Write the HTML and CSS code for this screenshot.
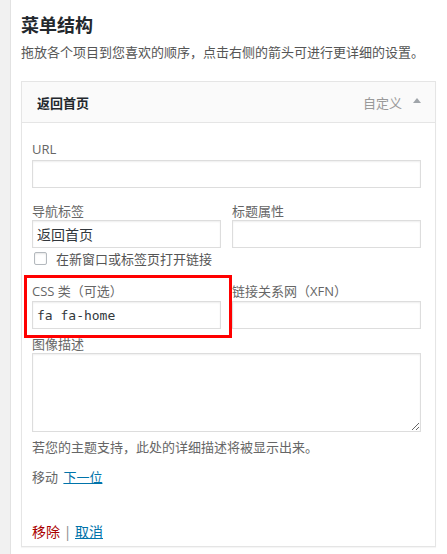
FILE: index.html
```html
<!DOCTYPE html>
<html lang="zh-CN">
    <head>
        <title>菜单结构</title>
        <meta charset="utf-8">
        <meta name="viewport" content="width=device-width, initial-scale=1">
        <link rel="stylesheet" href="styles.css">
    </head>
    <body>
        <div class="wrap">
            <h2 class="menu-title">菜单结构</h2>
            <p class="menu-desc">拖放各个项目到您喜欢的顺序，点击右侧的箭头可进行更详细的设置。</p>

            <div class="menu-item">
                <div class="item-bar">
                    <span class="item-title">返回首页</span>
                    <span class="item-type">自定义</span>
                    <span class="item-arrow"></span>
                </div>
                <div class="item-settings">
                    <p class="field">
                        <label class="field-label">URL</label>
                        <input class="field-input" type="text" value="">
                    </p>
                    <div class="field-row row-nav">
                        <p class="field">
                            <label class="field-label">导航标签</label>
                            <input class="field-input" type="text" value="返回首页">
                        </p>
                        <p class="field">
                            <label class="field-label">标题属性</label>
                            <input class="field-input" type="text" value="">
                        </p>
                    </div>
                    <p class="check-row">
                        <input class="check" type="checkbox">
                        <span>在新窗口或标签页打开链接</span>
                    </p>
                    <div class="field-row row-css">
                        <p class="field field-marked">
                            <label class="field-label">CSS 类（可选）</label>
                            <input class="field-input mono" type="text" value="fa fa-home">
                            <span class="mark-box"></span>
                        </p>
                        <p class="field">
                            <label class="field-label">链接关系网（XFN）</label>
                            <input class="field-input" type="text" value="">
                        </p>
                    </div>
                    <p class="field row-desc">
                        <label class="field-label">图像描述</label>
                        <textarea class="field-textarea"></textarea>
                    </p>
                    <p class="help">若您的主题支持，此处的详细描述将被显示出来。</p>
                    <p class="move">移动 <a href="#">下一位</a></p>
                    <p class="actions"><a class="delete" href="#">移除</a> <span class="sep">|</span> <a href="#">取消</a></p>
                </div>
            </div>
        </div>
    </body>
</html>
```

FILE: styles.css
```css
html, body {
  margin: 0;
  height: 100%;
}

body {
  background: #f1f1f1;
  color: #444;
  font-family: "Open Sans", "Noto Sans CJK SC", sans-serif;
  font-size: 13px;
}

.wrap {
  margin-left: 10px;
  border-left: 1px solid #e2e2e2;
  background: #fff;
  min-height: 100%;
  box-sizing: border-box;
  padding: 13px 11px 0 10px;
}

.menu-title {
  margin: 0;
  font-size: 18px;
  line-height: 24px;
  font-weight: bold;
  color: #23282d;
}

.menu-desc {
  margin: 6px 0 0;
  line-height: 19px;
  color: #555;
}

.menu-item {
  margin-top: 19px;
  border: 1px solid #e5e5e5;
  box-shadow: 0 1px 1px rgba(0, 0, 0, 0.04);
}

.item-bar {
  display: flex;
  align-items: center;
  height: 40px;
  padding: 0 14px 0 15px;
  background: #fafafa;
  border-bottom: 1px solid #e5e5e5;
}

.item-title {
  flex: 1;
  font-weight: bold;
  color: #23282d;
}

.item-type {
  color: #999;
}

.item-arrow {
  margin-left: 11px;
  width: 0;
  height: 0;
  border-left: 4px solid transparent;
  border-right: 4px solid transparent;
  border-bottom: 5px solid #a0a5aa;
  margin-bottom: 3px;
}

.item-settings {
  padding: 17px 14px 5px 10px;
}

.item-settings p {
  margin: 0;
}

.field-label {
  display: block;
  line-height: 18px;
  color: #666;
}

.field-input {
  display: block;
  box-sizing: border-box;
  width: 100%;
  height: 28px;
  margin: 2px 0 0;
  padding: 0 4px;
  border: 1px solid #ddd;
  box-shadow: inset 0 1px 2px rgba(0, 0, 0, 0.07);
  font-family: "Open Sans", "Noto Sans CJK SC", sans-serif;
  font-size: 14px;
  color: #32373c;
  background: #fff;
  outline: none;
}

.mono {
  font-family: "DejaVu Sans Mono", monospace;
  font-size: 13px;
}

.field-row {
  display: grid;
  grid-template-columns: 1fr 1fr;
  column-gap: 11px;
}

.row-nav {
  margin-top: 14px;
}

.row-nav .field-input {
  margin-top: 0;
}

.check-row {
  display: flex;
  align-items: center;
  height: 18px;
  margin-top: 1px !important;
  color: #555;
}

.check {
  appearance: none;
  -webkit-appearance: none;
  width: 13px;
  height: 13px;
  margin: 0 9px 0 2px;
  border: 1px solid #b4b9be;
  border-radius: 2px;
  background: #fff;
  box-shadow: inset 0 1px 2px rgba(0, 0, 0, 0.1);
}

.row-css {
  margin-top: 15px;
}

.row-css .field-input {
  margin-top: 1px;
}

.field-marked {
  position: relative;
}

.mark-box {
  position: absolute;
  left: -8px;
  top: -7px;
  width: 208px;
  height: 63px;
  box-sizing: border-box;
  border: 3px solid #f00;
}

.row-desc {
  margin-top: 6px !important;
}

.field-textarea {
  display: block;
  box-sizing: border-box;
  width: 100%;
  height: 79px;
  margin: 0;
  border: 1px solid #ddd;
  box-shadow: inset 0 1px 2px rgba(0, 0, 0, 0.07);
  resize: vertical;
}

.help {
  margin-top: 6px !important;
  line-height: 18px;
  color: #666;
}

.move {
  margin-top: 12px !important;
  line-height: 18px;
  color: #666;
}

.move a {
  margin-left: 2px;
}

a {
  color: #0073aa;
  text-decoration: underline;
}

.actions {
  margin-top: 37px !important;
  line-height: 18px;
  font-size: 14px;
}

.delete {
  color: #a00;
  text-decoration: none;
}

.sep {
  color: #888;
}
```
